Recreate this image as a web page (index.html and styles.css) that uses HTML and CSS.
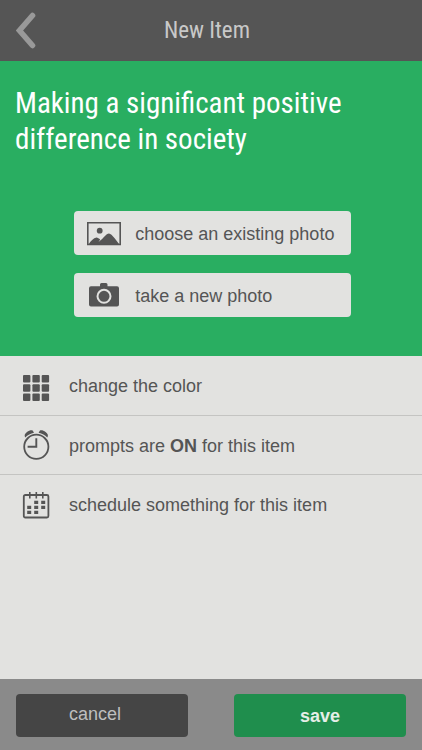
FILE: index.html
```html
<!DOCTYPE html>
<html lang="en">
<head>
<meta charset="utf-8">
<meta name="viewport" content="width=device-width, initial-scale=1">
<title>New Item</title>
<link rel="stylesheet" href="styles.css">
</head>
<body>
<header class="topbar">
  <button class="back" type="button" aria-label="Back">
    <svg width="20" height="38" viewBox="0 0 20 38" aria-hidden="true"><path d="M16.500 3.500 3.500 18.500l13 15" fill="none" stroke="#999" stroke-width="5.600" stroke-linecap="round" stroke-linejoin="miter"/></svg>
  </button>
  <h1 class="title">New Item</h1>
</header>
<main class="content">
  <section class="hero">
    <h2 class="headline">Making a significant positive difference in society</h2>
    <div class="photo-actions">
      <button class="photo-button" type="button">
        <svg class="photo-icon" width="34" height="24" viewBox="0 0 34 24" aria-hidden="true"><path d="M.8.800h32.400v21.700H.8z" fill="none" stroke="#555" stroke-width="1.600"/><circle cx="12.700" cy="8.700" r="2.900" fill="#555"/><path d="M1.500 22.500c2-3.500 5-6.500 8-7 1.200 0 2.500 1.200 3.700 2L11.500 20l3-2.500c2.500-2 4.500-5.500 7.500-6 3 .5 7.500 7 10.500 11z" fill="#555"/></svg>
        <span>choose an existing photo</span>
      </button>
      <button class="photo-button" type="button">
        <svg class="photo-icon" width="34" height="26" viewBox="0 0 34 26" aria-hidden="true"><path d="M4 3.200h9V1.500Q13 0 14.500 0h4.500q1.500 0 1.500 1.500v1.700h9.500q2 0 2 2v16.300q0 2-2 2H4q-2 0-2-2V5.200q0-2 2-2z" fill="#555"/><circle cx="17" cy="13.300" r="6.500" fill="none" stroke="#e2e2e0" stroke-width="2"/></svg>
        <span>take a new photo</span>
      </button>
    </div>
  </section>
  <nav class="options" aria-label="Item options">
    <button class="option" type="button">
      <svg class="option-icon" width="28" height="32" viewBox="0 0 28 32" aria-hidden="true"><g fill="#555"><rect x="1" y="4" width="7.400" height="7.400" rx="1"/><rect x="10.400" y="4" width="7.400" height="7.400" rx="1"/><rect x="19.700" y="4" width="7.400" height="7.400" rx="1"/><rect x="1" y="13.300" width="7.400" height="7.400" rx="1"/><rect x="10.400" y="13.300" width="7.400" height="7.400" rx="1"/><rect x="19.700" y="13.300" width="7.400" height="7.400" rx="1"/><rect x="1" y="22.600" width="7.400" height="7.400" rx="1"/><rect x="10.400" y="22.600" width="7.400" height="7.400" rx="1"/><rect x="19.700" y="22.600" width="7.400" height="7.400" rx="1"/></g></svg>
      <span>change the color</span>
    </button>
    <button class="option" type="button">
      <svg class="option-icon" width="28" height="32" viewBox="0 0 28 32" aria-hidden="true"><circle cx="14.300" cy="16.800" r="12.100" fill="none" stroke="#555" stroke-width="1.800"/><path d="M14.300 8.200v8.600H5.600" fill="none" stroke="#555" stroke-width="1.900"/><path d="M3.300 7.400C1.800 5.500 3 3.500 5 2 7 .3 10 0 10.800.7l1.200 2.100C8.500 3.700 5.700 5.100 3.300 7.400zM25.300 7.400C26.800 5.500 25.600 3.500 23.600 2 21.600.3 18.600 0 17.800.7l-1.200 2.100C20.100 3.700 22.900 5.100 25.300 7.400z" fill="#555"/></svg>
      <span>prompts are <strong>ON</strong> for this item</span>
    </button>
    <button class="option" type="button">
      <svg class="option-icon" width="28" height="32" viewBox="0 0 28 32" aria-hidden="true"><rect x="1.800" y="6" width="24.600" height="22.500" rx="1.500" fill="none" stroke="#555" stroke-width="1.800"/><path d="M7.800 3v6.500M14.300 3v6.500M20.800 3v6.500" stroke="#555" stroke-width="1.600"/><path d="M12.200 11.800h4v3.200h-4zM19.200 11.800h4v3.200h-4zM5.200 16.800h4V20h-4zM12.200 16.800h4V20h-4zM19.200 16.800h4V20h-4zM5.200 21.800h4V25h-4zM12.200 21.800h4V25h-4z" fill="#555"/></svg>
      <span>schedule something for this item</span>
    </button>
  </nav>
</main>
<footer class="actions">
  <button class="action cancel" type="button">cancel</button>
  <button class="action save" type="button">save</button>
</footer>
</body>
</html>
```
FILE: styles.css
```css
* {
  box-sizing: border-box;
}

body {
  display: flex;
  flex-direction: column;
  min-height: 100vh;
  margin: 0;
  background: #e2e2e0;
  color: #555;
  font-family: "Liberation Sans", Arial, sans-serif;
  font-size: 18px;
}

button {
  border: 0;
  font: inherit;
  color: inherit;
  text-align: left;
  cursor: pointer;
}

svg {
  display: block;
  flex: none;
}

.topbar {
  display: grid;
  grid-template-columns: 56px 1fr 56px;
  align-items: center;
  height: 61px;
  background: #555;
}

.back {
  padding: 0 16px;
  background: none;
}

.title {
  margin: 0;
  padding-right: 8px;
  color: #c8c8c8;
  font: 400 23px/28px "Roboto Condensed", Roboto, sans-serif;
  text-align: center;
}

.content {
  flex: 1;
}

.hero {
  padding: 24px 12px 39px 15px;
  background: #29ae61;
}

.headline {
  margin: 0;
  color: #fff;
  font: 400 29px/36px "Roboto Condensed", Roboto, sans-serif;
}

.photo-actions {
  display: grid;
  gap: 18px;
  width: 70%;
  margin: 54px auto 0;
}

.photo-button {
  display: flex;
  align-items: center;
  gap: 14px;
  height: 44px;
  padding: 2px 12px 0 13px;
  border-radius: 4px;
  background: #e2e2e0;
  white-space: nowrap;
}

.option {
  display: flex;
  align-items: center;
  gap: 19px;
  width: 100%;
  height: 59px;
  padding: 2px 22px 0;
  background: none;
}

.option + .option {
  border-top: 1px solid #c4c4c2;
}

.actions {
  display: grid;
  grid-template-columns: 1fr 1fr;
  gap: 46px;
  padding: 15px 16px 13px;
  background: #8a8a8a;
}

.action {
  height: 43px;
  border-radius: 4px;
  text-align: center;
}

.cancel {
  padding: 0 20px 2px 6px;
  background: #454545;
  color: #bebebe;
}

.save {
  padding: 2px 6px 0;
  background: #1f8e4d;
  color: #e5eee8;
  font-weight: 700;
}
```
